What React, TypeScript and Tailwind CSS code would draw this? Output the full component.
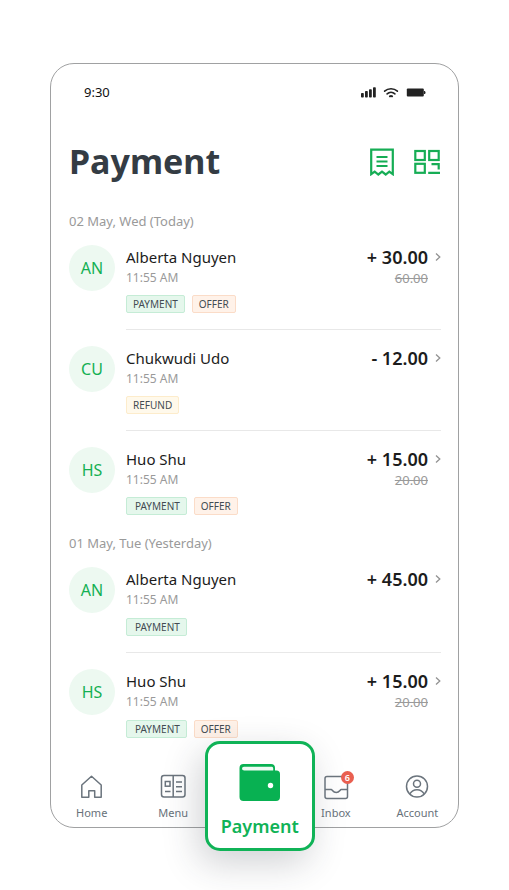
import type { ReactNode } from "react"

type Tag = "PAYMENT" | "OFFER" | "REFUND"

type Transaction = {
  initials: string
  name: string
  time: string
  amount: string
  original?: string
  tags: Tag[]
  compact?: boolean
}

const today: Transaction[] = [
  { initials: "AN", name: "Alberta Nguyen", time: "11:55 AM", amount: "+ 30.00", original: "60.00", tags: ["PAYMENT", "OFFER"], compact: true },
  { initials: "CU", name: "Chukwudi Udo", time: "11:55 AM", amount: "- 12.00", tags: ["REFUND"], compact: true },
  { initials: "HS", name: "Huo Shu", time: "11:55 AM", amount: "+ 15.00", original: "20.00", tags: ["PAYMENT", "OFFER"] },
]

const yesterday: Transaction[] = [
  { initials: "AN", name: "Alberta Nguyen", time: "11:55 AM", amount: "+ 45.00", tags: ["PAYMENT"] },
  { initials: "HS", name: "Huo Shu", time: "11:55 AM", amount: "+ 15.00", original: "20.00", tags: ["PAYMENT", "OFFER"] },
]

const tagColors: Record<Tag, string> = {
  PAYMENT: "border-[#c5ecd6] bg-[#e5f7ec]",
  OFFER: "border-[#fbdcc8] bg-[#fff2e9]",
  REFUND: "border-[#fdeccb] bg-[#fff9eb]",
}

function TransactionRow({ item, roomy, last }: { item: Transaction; roomy: boolean; last: boolean }) {
  return (
    <li className="flex gap-[11px] pt-4 first:pt-0">
      <div className="flex size-[46px] shrink-0 items-center justify-center rounded-full bg-[#edf9f1] text-base text-[#14b053]">
        {item.initials}
      </div>
      <div className={last ? "flex-1" : "flex-1 border-b border-[#e8e8e8] pb-4"}>
        <div className="flex justify-between">
          <div>
            <p className="text-[15px] leading-6 text-[#1c1c1c]">{item.name}</p>
            <p className="text-[12px] leading-[18px] text-[#9a9a9a]">{item.time}</p>
          </div>
          <div className="flex gap-[7px]">
            <div className="text-right">
              <p className="text-[18px] leading-6 font-semibold text-[#1c1c1c]">{item.amount}</p>
              {item.original && <s className="block text-[13px] leading-[18px] text-[#9a9a9a]">{item.original}</s>}
            </div>
            <svg className="mt-[7px] h-[10px] w-[6px]" viewBox="0 0 6 10" fill="none" stroke="#929292" strokeWidth="1.3">
              <path d="M1 1.5 4.8 5 1 8.5" />
            </svg>
          </div>
        </div>
        <div className={roomy ? "mt-[9px] flex gap-[7px]" : "mt-2 flex gap-[7px]"}>
          {item.tags.map((tag) => (
            <span
              key={tag}
              className={`${tagColors[tag]} ${tag === "PAYMENT" && !item.compact ? "pl-2" : "pl-[6px]"} h-[18px] rounded-[2px] border pr-[6px] text-[10px] leading-4 text-[#434b52]`}
            >
              {tag}
            </span>
          ))}
        </div>
      </div>
    </li>
  )
}

function TransactionGroup({ date, items, roomy = false }: { date: string; items: Transaction[]; roomy?: boolean }) {
  return (
    <section className="mb-[18px]">
      <h2 className="mb-[14px] text-[13px] leading-5 text-[#9a9a9a]">{date}</h2>
      <ul>
        {items.map((item, i) => (
          <TransactionRow key={i} item={item} roomy={roomy} last={i === items.length - 1} />
        ))}
      </ul>
    </section>
  )
}

function NavItem({ label, children }: { label: string; children: ReactNode }) {
  return (
    <li>
      <a href="#" className="flex flex-col items-center gap-1 text-[11px] leading-4 text-[#68717a]">
        {children}
        {label}
      </a>
    </li>
  )
}

export default function App() {
  return (
    <div className="bg-white px-[50px] pt-[63px] pb-[63px] font-['Noto_Sans','Open_Sans',sans-serif]">
      <main className="rounded-[24px] border border-[#a0a1a2] bg-white">
        {/* Status bar */}
        <div className="flex items-center justify-between pt-[18px] pr-8 pl-[33px]">
          <span className="text-[13px] leading-5 text-[#101010]">9:30</span>
          <div className="flex items-center gap-[7px]">
            <svg className="h-[11px] w-[15px]" viewBox="0 0 15 11" fill="#222">
              <rect x="0" y="6" width="2.8" height="4.5" rx=".8" />
              <rect x="4" y="4" width="2.8" height="6.5" rx=".8" />
              <rect x="8" y="2.3" width="2.8" height="8.2" rx=".8" />
              <rect x="12" y=".3" width="2.8" height="10.2" rx=".8" />
            </svg>
            <svg className="h-[11px] w-4" viewBox="0 0 16 11" fill="none" stroke="#222" strokeWidth="1.6" strokeLinecap="round">
              <path d="M1.6 4.2a9.4 9.4 0 0 1 12.8 0M4.1 6.9a5.8 5.8 0 0 1 7.8 0" />
              <path d="M6.9 9.3a2 2 0 0 1 2.2 0" strokeWidth="2" />
            </svg>
            <svg className="h-[9px] w-5" viewBox="0 0 20 9" fill="#222">
              <rect x=".8" y=".5" width="17" height="8" rx="1" />
              <path d="M18 3h.6q.9 0 .9 1.5T18.6 6H18z" />
            </svg>
          </div>
        </div>

        <div className="pr-[17px] pl-[18px]">
          <header className="mt-9 flex items-center justify-between pr-px">
            <h1 className="text-[34px] leading-[46px] font-bold text-[#343c44]">Payment</h1>
            <div className="flex gap-5 pt-[2px]">
              <button type="button" aria-label="Receipts">
                <svg className="h-7 w-6" viewBox="0 0 24 28" fill="none" stroke="#16ad55" strokeWidth="2.2">
                  <path d="M1.2 26.2V1.7h21.6v24.5l-3.5-2.5-3.6 2.8-3.7-2.8-3.7 2.8-3.6-2.8z" />
                  <path d="M6.5 9h11M6.5 13.5h11M6.5 18h11" />
                </svg>
              </button>
              <button type="button" aria-label="Scan code">
                <svg className="h-7 w-[26px]" viewBox="0 0 26 28" fill="none" stroke="#16ad55" strokeWidth="2.2">
                  <rect x="1.3" y="3" width="9.5" height="9" />
                  <rect x="15.2" y="3" width="9.5" height="9" />
                  <rect x="1.3" y="15.8" width="9.5" height="9" />
                  <path d="M17.5 16.2h7.2v5.3M14.2 24.8H26" />
                </svg>
              </button>
            </div>
          </header>

          <div className="mt-[27px]">
            <TransactionGroup date="02 May, Wed (Today)" items={today} />
            <TransactionGroup date="01 May, Tue (Yesterday)" items={yesterday} roomy />
          </div>
        </div>

        <nav className="pt-[17px] pb-[6px]" aria-label="Main">
          <ul className="grid grid-cols-5">
            <NavItem label="Home">
              <svg className="h-7 w-6" viewBox="0 0 24 28" fill="none" stroke="#6b747d" strokeWidth="1.5" strokeLinejoin="round">
                <path d="M1.8 12 11.5 3.2 21.2 12v12.2h-6.5v-6.4H8.8v6.4h-7z" />
              </svg>
            </NavItem>
            <NavItem label="Menu">
              <svg className="h-7 w-[26px]" viewBox="0 0 26 28" fill="none" stroke="#6b747d" strokeWidth="1.5">
                <rect x="1.5" y="2.5" width="23.5" height="21.5" rx="2.5" />
                <path d="M13.2 2.5V24M5 18.5h5.5M16 9h6M16 13.8h6M16 18.5h6" />
                <rect x="5.3" y="8.5" width="4.7" height="4.7" />
              </svg>
            </NavItem>
            <li className="relative">
              <a
                href="#"
                aria-current="page"
                className="absolute -top-8 -left-[9px] flex size-[110px] flex-col items-center rounded-[15px] border-[3px] border-[#10b357] bg-white pt-5 text-[18px] leading-6 font-semibold text-[#10b357] shadow-[-6px_12px_36px_rgba(40,45,60,0.22)]"
              >
                <svg className="mb-3 h-[38px] w-[42px]" viewBox="0 0 42 38">
                  <path d="M4.5 0H32q4 0 4 4v2.5h1.5Q41 6.5 41 10v23q0 4-4 4H4.5Q.5 37 .5 33V4q0-4 4-4z" fill="#08b152" />
                  <path d="M5 2.8h28q1.2 0 1.2 1.7v2H5.2Q3 6.5 3 4.7T5 2.8z" fill="#effbf4" />
                  <circle cx="31.5" cy="21.5" r="2.7" fill="#fff" />
                </svg>
                Payment
              </a>
            </li>
            <NavItem label="Inbox">
              <span className="relative">
                <svg className="h-7 w-[26px]" viewBox="0 0 26 28" fill="none" stroke="#6b747d" strokeWidth="1.5" strokeLinejoin="round">
                  <rect x="2" y="3.5" width="22.5" height="22" rx="2" />
                  <path d="M2 16.5h6.2c1.2 0 1.6 3 5 3s3.8-3 5-3h6.3" />
                </svg>
                <span className="absolute -top-[2px] left-[18px] size-[13px] rounded-full bg-[#e95f50] text-center text-[9px] leading-[13px] font-semibold text-white">
                  6
                </span>
              </span>
            </NavItem>
            <NavItem label="Account">
              <svg className="h-7 w-6" viewBox="0 0 24 28" fill="none" stroke="#6b747d" strokeWidth="1.5">
                <circle cx="12" cy="13.5" r="10.5" />
                <circle cx="12" cy="10.7" r="3.5" />
                <path d="M4.8 21c1.5-2.8 4.2-4.3 7.2-4.3s5.7 1.5 7.2 4.3" />
              </svg>
            </NavItem>
          </ul>
        </nav>
      </main>
    </div>
  )
}
